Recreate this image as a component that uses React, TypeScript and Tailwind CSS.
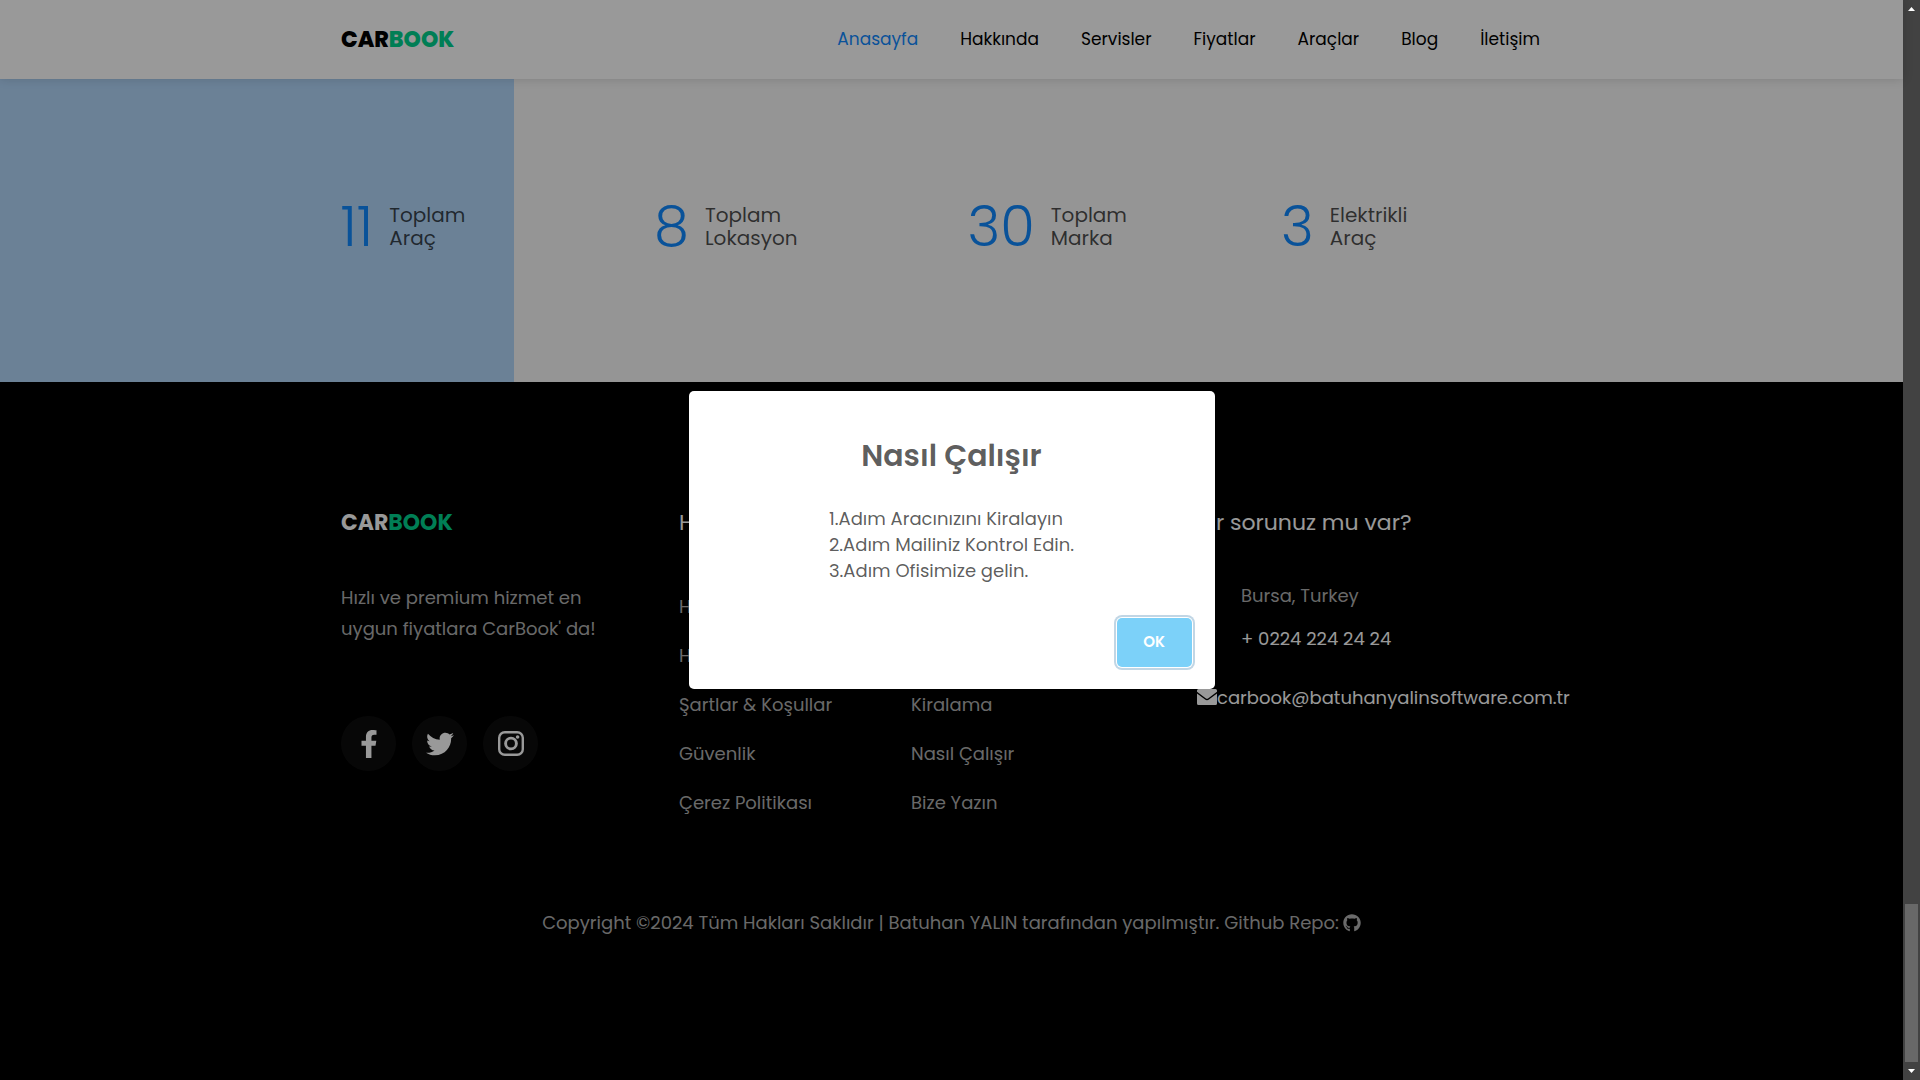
import { FaFacebookF, FaTwitter, FaGithub } from "react-icons/fa";

const navItems = ["Anasayfa", "Hakkında", "Servisler", "Fiyatlar", "Araçlar", "Blog", "İletişim"];

const counters = [
  { value: "11", top: "Toplam", bottom: "Araç" },
  { value: "8", top: "Toplam", bottom: "Lokasyon" },
  { value: "30", top: "Toplam", bottom: "Marka" },
  { value: "3", top: "Elektrikli", bottom: "Araç" },
];

const infoLinks = ["Hakkında", "Hizmetler", "Şartlar & Koşullar", "Güvenlik", "Çerez Politikası"];
const supportLinks = ["Kiralama", "Nasıl Çalışır", "Bize Yazın"];

function InstagramIcon() {
  return (
    <svg width="26" height="25" viewBox="0 0 26 25" fill="none" stroke="currentColor" strokeWidth="2.4">
      <rect x="1.2" y="1.2" width="23.6" height="22.6" rx="5.6" />
      <circle cx="13" cy="12.5" r="5.4" strokeWidth="2.9" />
      <circle cx="19.6" cy="6" r="1.8" fill="currentColor" stroke="none" />
    </svg>
  );
}

function EnvelopeIcon() {
  return (
    <svg width="20" height="16" viewBox="0 0 20 16" fill="currentColor">
      <path d="M1.5 0h17A1.5 1.5 0 0 1 20 1.5v1.2L11.4 9.2a2.3 2.3 0 0 1-2.8 0L0 2.7V1.5A1.5 1.5 0 0 1 1.5 0Z" />
      <path d="M0 4.4 7.8 10.3a3.6 3.6 0 0 0 4.4 0L20 4.4V14.5A1.5 1.5 0 0 1 18.5 16H1.5A1.5 1.5 0 0 1 0 14.5Z" />
    </svg>
  );
}

const socials = [
  { label: "Facebook", icon: <FaFacebookF /> },
  { label: "Twitter", icon: <FaTwitter /> },
  { label: "Instagram", icon: <InstagramIcon /> },
];

function LinkList({ items }: { items: string[] }) {
  return (
    <ul className="flex flex-col">
      {items.map((item) => (
        <li key={item} className="h-[49px]">
          <a href="#" className="leading-[27px] text-white/70">
            {item}
          </a>
        </li>
      ))}
    </ul>
  );
}

function Header() {
  return (
    <header className="relative h-[79px] bg-white shadow-[0_0_10px_rgba(0,0,0,0.15)]">
      <div className="mx-auto flex h-full max-w-[1221px] items-center justify-between">
        <a href="#" className="text-[22px] font-extrabold text-black">
          CAR<span className="text-[#01d28e]">BOOK</span>
        </a>
        <nav className="flex gap-[42px] pr-[22px] text-[17px]">
          {navItems.map((item, i) => (
            <a key={item} href="#" className={i === 0 ? "text-[#1089ff]" : "text-black"}>
              {item}
            </a>
          ))}
        </nav>
      </div>
    </header>
  );
}

function Counters() {
  return (
    <section className="bg-[linear-gradient(to_right,#b2d7fb_27%,#f8f8f8_27%)] pt-[114px] pb-[122px]">
      <div className="mx-auto grid max-w-[1254px] grid-cols-4">
        {counters.map((c) => (
          <div key={c.value} className="flex h-[67px] items-center gap-4 px-4">
            <strong className="text-[56px] leading-none font-light text-[#1089ff]">{c.value}</strong>
            <span className="text-xl leading-[23px] text-black/70">
              {c.top}
              <br />
              {c.bottom}
            </span>
          </div>
        ))}
      </div>
    </section>
  );
}

function Footer() {
  return (
    <footer className="flex-1 bg-black pt-[124px] text-[18px] text-white/70">
      <div className="mx-auto grid max-w-[1221px] grid-cols-[338fr_232fr_286fr_minmax(0,365fr)]">
        <div>
          <h2 className="text-[22px] leading-[33px] font-bold text-white">
            CAR<span className="text-[#01d28e]">BOOK</span>
          </h2>
          <p className="mt-[43px] leading-[31px]">
            Hızlı ve premium hizmet en
            <br />
            uygun fiyatlara CarBook' da!
          </p>
          <div className="mt-[72px] flex gap-4 text-[28px] text-white">
            {socials.map((s) => (
              <a
                key={s.label}
                href="#"
                aria-label={s.label}
                className="flex size-[55px] items-center justify-center rounded-full bg-white/5"
              >
                {s.icon}
              </a>
            ))}
          </div>
        </div>
        <div>
          <h2 className="mb-[54px] text-[22px] leading-[33px] text-white">Hakkımızda</h2>
          <LinkList items={infoLinks} />
        </div>
        <div className="pt-[185px]">
          <LinkList items={supportLinks} />
        </div>
        <div className="whitespace-nowrap">
          <h2 className="text-[22px] leading-[33px] text-white">Bir sorunuz mu var?</h2>
          <p className="mt-[43px] pl-11 leading-[27px]">Bursa, Turkey</p>
          <p className="mt-4 pl-11 leading-[27px] text-white">+ 0224 224 24 24</p>
          <a href="#" className="mt-8 flex items-center leading-[27px] text-white">
            <span className="shrink-0 pb-0.5">
              <EnvelopeIcon />
            </span>
            carbook@batuhanyalinsoftware.com.tr
          </a>
        </div>
      </div>
      <p className="mt-[69px] flex items-center justify-center gap-1 leading-[31px]">
        Copyright ©2024 Tüm Hakları Saklıdır | Batuhan YALIN tarafından yapılmıştır. Github Repo:
        <a href="#" aria-label="Github">
          <FaGithub className="size-[18px]" />
        </a>
      </p>
    </footer>
  );
}

function Modal() {
  return (
    <div className="absolute inset-0 flex items-center justify-center bg-black/40">
      <div
        role="dialog"
        aria-labelledby="modal-title"
        className="w-[526px] rounded-[5px] bg-white px-[23px] pt-[42px] pb-[22px]"
      >
        <h2 id="modal-title" className="text-center text-3xl leading-[45px] font-semibold text-black/65">
          Nasıl Çalışır
        </h2>
        <p className="mx-auto mt-7 w-fit text-[18px] leading-[26px] text-black/65">
          1.Adım Aracınızını Kiralayın
          <br />
          2.Adım Mailiniz Kontrol Edin.
          <br />
          3.Adım Ofisimize gelin.
        </p>
        <div className="mt-[34px] flex justify-end">
          <button
            type="button"
            className="h-[49px] w-[75px] rounded-[5px] bg-[#7cd1f9] text-[15px] font-semibold text-white shadow-[0_0_0_1px_#fff,0_0_0_3px_rgba(43,114,165,0.29)]"
          >
            OK
          </button>
        </div>
      </div>
    </div>
  );
}

function Scrollbar() {
  return (
    <div className="flex w-[17px] shrink-0 flex-col items-center justify-between bg-[#424242] py-[7px]" aria-hidden="true">
      <svg width="7" height="4" viewBox="0 0 7 4" fill="#fff">
        <path d="M3.5 0 7 4H0Z" />
      </svg>
      <div className="flex w-full flex-1 flex-col justify-end px-0.5 pb-[7px]">
        <div className="h-[15%] bg-[#686868]" />
      </div>
      <svg width="7" height="4" viewBox="0 0 7 4" fill="#fff">
        <path d="M0 0H7L3.5 4Z" />
      </svg>
    </div>
  );
}

export default function App() {
  return (
    <div className="flex min-h-screen font-['Poppins','Inter',sans-serif]">
      <div className="relative flex min-w-0 flex-1 flex-col">
        <Header />
        <Counters />
        <Footer />
        <Modal />
      </div>
      <Scrollbar />
    </div>
  );
}
